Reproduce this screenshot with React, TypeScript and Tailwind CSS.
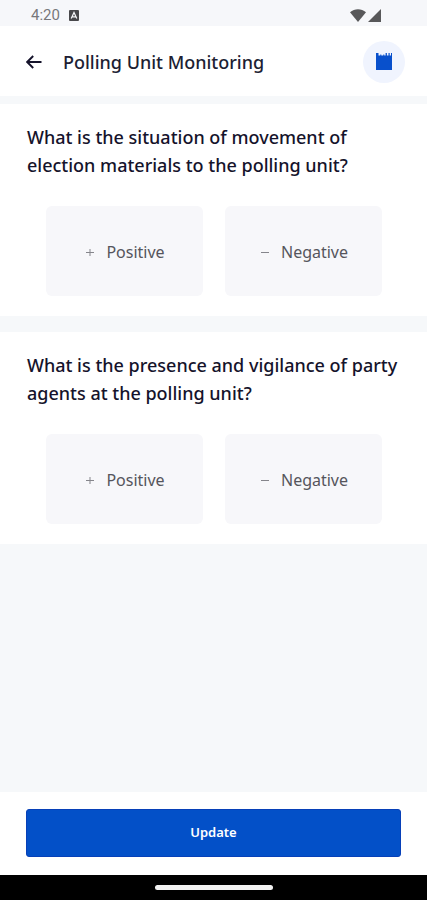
import React, { useState } from "react";

type Answer = "positive" | "negative";

interface Question {
  id: string;
  text: string;
}

const questions: Question[] = [
  {
    id: "materials",
    text: "What is the situation of movement of election materials to the polling unit?",
  },
  {
    id: "agents",
    text: "What is the presence and vigilance of party agents at the polling unit?",
  },
];

const StatusBar: React.FC = () => (
  <div className="flex h-[26px] items-center justify-between bg-[#f6f7fa] pl-[31px] pr-[46px] pt-1">
    <div className="flex items-center gap-[9px] text-[#77777b]">
      <span className="font-[Roboto,sans-serif] text-[15px] leading-5">
        4:20
      </span>
      <svg width="10" height="11" viewBox="0 0 10 11" aria-hidden="true">
        <rect width="10" height="11" rx="1" fill="#48484b" />
        <path
          d="M2.2 8.6 5 2.4l2.8 6.2M3.4 6.8h3.2"
          fill="none"
          stroke="#f6f7fa"
          strokeWidth="1.2"
        />
      </svg>
    </div>
    <div className="flex items-center gap-[2px]">
      <svg width="16" height="13" viewBox="0 0 16 13" aria-hidden="true">
        <path d="M0 3.2C4.6-.7 11.4-.7 16 3.2L8 13z" fill="#58585a" />
      </svg>
      <svg width="13" height="13" viewBox="0 0 13 13" aria-hidden="true">
        <path d="M13 0v13H0z" fill="#58585a" />
      </svg>
    </div>
  </div>
);

const Header: React.FC = () => (
  <header className="flex h-[70px] items-center bg-white pl-[26px] pr-[22px] pt-px">
    <button type="button" aria-label="Back" className="text-[#15132b]">
      <svg width="16" height="14" viewBox="0 0 16 14" aria-hidden="true">
        <path
          d="M15.5 7H1.5M7.2 1 1.2 7l6 6"
          fill="none"
          stroke="currentColor"
          strokeWidth="1.9"
        />
      </svg>
    </button>
    <h1 className="ml-[21px] flex-1 text-[18px] font-medium leading-7 text-[#201e33]">
      Polling Unit Monitoring
    </h1>
    <button
      type="button"
      aria-label="Media"
      className="flex size-[42px] items-center justify-center rounded-full bg-[#f0f4fe]"
    >
      <svg width="16" height="17" viewBox="0 0 16 17" aria-hidden="true">
        <path
          d="M0 0h2.5v2.6h1.8V1.4h1v1.2h2V1.4h1v1.2h1.3V0h1.3v2.6h1.6V0h1.2v2.6H15V0h1v17H0z"
          fill="#0850cc"
        />
      </svg>
    </button>
  </header>
);

interface QuestionCardProps {
  question: Question;
  answer?: Answer;
  onAnswer: (answer: Answer) => void;
}

const QuestionCard: React.FC<QuestionCardProps> = ({
  question,
  answer,
  onAnswer,
}) => {
  const options: { value: Answer; label: string; path: string }[] = [
    { value: "positive", label: "Positive", path: "M0 4.5h8M4 1v7" },
    { value: "negative", label: "Negative", path: "M0 4.5h8" },
  ];

  return (
    <section className="bg-white pb-5 pt-[19px]">
      <h2 className="px-[27px] text-[18px] font-medium leading-7 text-[#15132b]">
        {question.text}
      </h2>
      <div className="mt-[27px] grid grid-cols-2 gap-[22px] pl-[46px] pr-[45px]">
        {options.map((option) => (
          <button
            key={option.value}
            type="button"
            aria-pressed={answer === option.value}
            onClick={() => onAnswer(option.value)}
            className="flex h-[90px] items-center justify-center gap-3 rounded-md bg-[#f7f7fa] pl-[2px] pt-[2px] text-[16px] text-[#55555c] aria-pressed:bg-[#eef3fe]"
          >
            <svg width="8" height="9" viewBox="0 0 8 9" aria-hidden="true">
              <path d={option.path} stroke="#85858b" strokeWidth="1" />
            </svg>
            {option.label}
          </button>
        ))}
      </div>
    </section>
  );
};

export default function App() {
  const [answers, setAnswers] = useState<Record<string, Answer>>({});

  return (
    <div className="flex min-h-screen flex-col bg-[#f6f8fa] font-['Noto_Sans',sans-serif]">
      <StatusBar />
      <Header />
      <main className="mt-2 flex flex-1 flex-col gap-4">
        {questions.map((question) => (
          <QuestionCard
            key={question.id}
            question={question}
            answer={answers[question.id]}
            onAnswer={(answer) =>
              setAnswers((prev) => ({ ...prev, [question.id]: answer }))
            }
          />
        ))}
      </main>
      <footer className="bg-white px-[26px] pb-[18px] pt-[17px]">
        <button
          type="button"
          className="h-12 w-full rounded-[3px] border border-[#0740b8] bg-[#0350c8] text-[13px] font-semibold text-white"
        >
          Update
        </button>
      </footer>
      {/* gesture bar */}
      <div className="flex h-[25px] items-center justify-center bg-black">
        <div className="h-[5px] w-[118px] rounded-full bg-[#f2f2f2]" />
      </div>
    </div>
  );
}
